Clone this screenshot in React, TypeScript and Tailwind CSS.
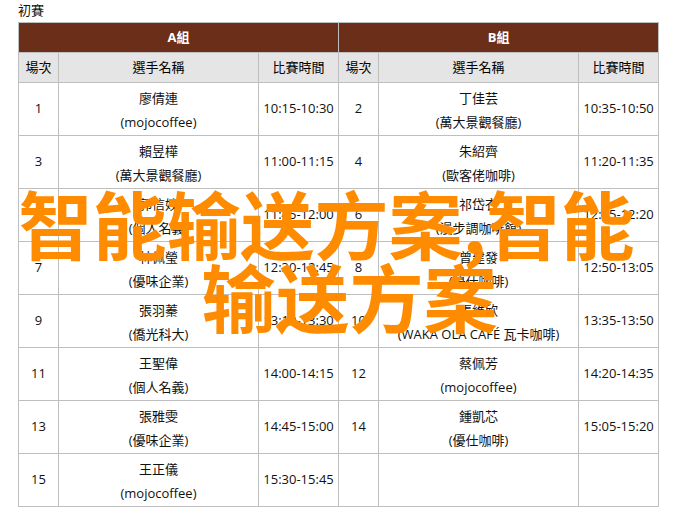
const rows = [
  [["1", "廖倩連", "(mojocoffee)", "10:15-10:30"], ["2", "丁佳芸", "(萬大景觀餐廳)", "10:35-10:50"]],
  [["3", "賴昱樺", "(萬大景觀餐廳)", "11:00-11:15"], ["4", "朱紹齊", "(歐客佬咖啡)", "11:20-11:35"]],
  [["5", "郭信妏", "(個人名義)", "11:45-12:00"], ["6", "祁岱衣", "(漫步調咖啡館)", "12:05-12:20"]],
  [["7", "林佩瑩", "(優味企業)", "12:30-12:45"], ["8", "曾建發", "(優仕咖啡)", "12:50-13:05"]],
  [["9", "張羽蓁", "(僑光科大)", "13:10-13:30"], ["10", "張維欣", "(WAKA OLA CAFÉ 瓦卡咖啡)", "13:35-13:50"]],
  [["11", "王聖偉", "(個人名義)", "14:00-14:15"], ["12", "蔡佩芳", "(mojocoffee)", "14:20-14:35"]],
  [["13", "張雅雯", "(優味企業)", "14:45-15:00"], ["14", "鍾凱芯", "(優仕咖啡)", "15:05-15:20"]],
  [["15", "王正儀", "(mojocoffee)", "15:30-15:45"], ["", "", "", ""]],
];

const headCell = "border border-[#bfbfbf] bg-[#e5e5e5] font-normal p-0 text-black";
const groupCell = "border border-[#bfbfbf] bg-[#6b2f19] p-0 pt-[1px] font-bold text-white";
const cell = "border border-[#bfbfbf] p-0 text-center align-middle";

function Match({ data }: { data: string[] }) {
  return (
    <>
      <td className={cell}>{data[0]}</td>
      <td className={cell}>
        {data[1] && (
          <div className="flex flex-col items-center pt-[1px] leading-[24px]">
            <span>{data[1]}</span>
            <span>{data[2]}</span>
          </div>
        )}
      </td>
      <td className={cell}>{data[3]}</td>
    </>
  );
}

export default function App() {
  return (
    <div className="relative h-[509px] w-[694px] overflow-hidden bg-white pl-[18px] pt-[2px] font-['Open_Sans','Noto_Sans_CJK_TC',sans-serif] text-[13px] text-[#111]">
      <p className="h-[20px] leading-[17px]">初賽</p>
      <table className="w-[640px] table-fixed border-collapse">
        <colgroup>
          <col className="w-[40px]" />
          <col className="w-[200px]" />
          <col className="w-[80px]" />
          <col className="w-[40px]" />
          <col className="w-[200px]" />
          <col className="w-[80px]" />
        </colgroup>
        <thead>
          <tr className="h-[30px]">
            <th colSpan={3} className={groupCell}>A組</th>
            <th colSpan={3} className={groupCell}>B組</th>
          </tr>
          <tr className="h-[30px]">
            <th className={headCell}>場次</th>
            <th className={headCell}>選手名稱</th>
            <th className={headCell}>比賽時間</th>
            <th className={headCell}>場次</th>
            <th className={headCell}>選手名稱</th>
            <th className={headCell}>比賽時間</th>
          </tr>
        </thead>
        <tbody>
          {rows.map((row, i) => (
            <tr key={i} className="h-[53px]">
              <Match data={row[0]} />
              <Match data={row[1]} />
            </tr>
          ))}
        </tbody>
      </table>
      {/* orange title lying over the table */}
      <div className="absolute left-0 top-[185px] w-[653px] text-center font-['Noto_Sans_CJK_SC',sans-serif] text-[74px] font-bold leading-[73px] text-[#ff8c00]">
        <div>智能输送方案,智能</div>
        <div className="pl-[46px]">输送方案</div>
      </div>
    </div>
  );
}
